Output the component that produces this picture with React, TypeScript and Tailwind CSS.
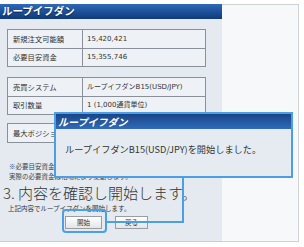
const jp = "font-['Noto_Sans_CJK_JP','Noto_Sans',sans-serif]";
const num = "font-['DejaVu_Sans','Noto_Sans_CJK_JP',sans-serif]";

function InfoTable({ rows }: { rows: [string, string][] }) {
  return (
    <div className="mx-[7px] w-[199px] border border-[#8a9097] bg-[#eef1f5]">
      {rows.map(([label, value], i) => (
        <div
          key={label}
          className={`flex h-[18px] items-center ${i > 0 ? "border-t border-[#8a9097]" : ""}`}
        >
          <div className={`flex h-full w-[75px] items-center border-r border-[#8a9097] pl-[5px] text-[7.3px] text-[#333] ${jp}`}>
            {label}
          </div>
          <div className={`pl-[4px] text-[7px] text-[#333] ${num}`}>{value}</div>
        </div>
      ))}
    </div>
  );
}

export default function App() {
  return (
    <div className="relative h-[247px] w-[304px] overflow-hidden bg-white">
      <div className="mt-[4px] flex h-[238px]">
        {/* left panel */}
        <div className="flex w-[222px] flex-col border-b border-[#c9ced4] bg-[#e5eaf0]">
          <div className="flex h-[15px] items-center bg-gradient-to-b from-[#2d6ab8] to-[#0f3a7c] pl-[2px]">
            <span className={`text-[10.5px] font-bold leading-none text-white [text-shadow:0_1px_1px_#0a1f44] ${jp}`}>
              ループイフダン
            </span>
          </div>
          <div className="mt-[10px]">
            <InfoTable
              rows={[
                ["新規注文可能額", "15,420,421"],
                ["必要目安資金", "15,355,746"],
              ]}
            />
          </div>
          <div className="mt-[10px]">
            <InfoTable
              rows={[
                ["売買システム", "ループイフダンB15(USD/JPY)"],
                ["取引数量", "1 (1,000通貨単位)"],
              ]}
            />
          </div>
          <div className="mt-[8px]">
            <InfoTable rows={[["最大ポジション数", "10"]]} />
          </div>
          <div className={`mt-[18px] pl-[9px] text-[6.5px] leading-[10px] text-[#444] ${jp}`}>
            <p>※必要目安資金は参考値です。</p>
            <p>実際の必要資金は相場により変動します。</p>
          </div>
          <p className={`mt-[4px] pl-[3px] text-[15px] font-light leading-[16px] text-[#333] ${jp}`}>
            3. 内容を確認し開始します。
          </p>
          <p className={`mt-[2px] pl-[8px] text-[6.5px] leading-[10px] text-[#333] ${jp}`}>
            上記内容でループイフダンを開始します。
          </p>
          <div className="mt-[3px] flex gap-[13px] pl-[65px]">
            <button className={`h-[13px] w-[37px] border border-[#9a9ea3] bg-gradient-to-b from-white to-[#e3e5e8] text-[6.5px] leading-none text-[#333] ${jp}`}>
              開始
            </button>
            <button className={`h-[13px] w-[33px] border border-[#9a9ea3] bg-gradient-to-b from-white to-[#e3e5e8] text-[6.5px] leading-none text-[#333] ${jp}`}>
              戻る
            </button>
          </div>
        </div>
        {/* right side */}
        <div className="w-[77px] border-y border-r border-[#cfd3d8] bg-[#f7f8fa]" />
      </div>

      {/* highlight around start button */}
      <div className="absolute left-[62px] top-[209px] h-[24px] w-[45px] rounded-[4px] border-2 border-[#4a9fe6]" />
      <div className="absolute left-[107px] top-[221px] h-[2px] w-[77px] bg-[#4a9fe6]" />
      <div className="absolute left-[182px] top-[176px] h-[47px] w-[2px] bg-[#4a9fe6]" />

      {/* completion dialog */}
      <div className="absolute left-[54px] top-[112px] h-[66px] w-[239px] border-2 border-[#4a9fe6] bg-[#e6ebf1]">
        <div className="flex h-[15px] items-center bg-gradient-to-b from-[#1b4488] to-[#2f6cb8] pl-[2px]">
          <span className={`text-[10px] font-bold italic leading-none text-white ${jp}`}>ループイフダン</span>
        </div>
        <p className={`mt-[14px] pl-[9px] text-[9.2px] leading-[12px] text-[#333] ${jp}`}>
          ループイフダンB15(USD/JPY)を開始しました。
        </p>
      </div>
    </div>
  );
}
